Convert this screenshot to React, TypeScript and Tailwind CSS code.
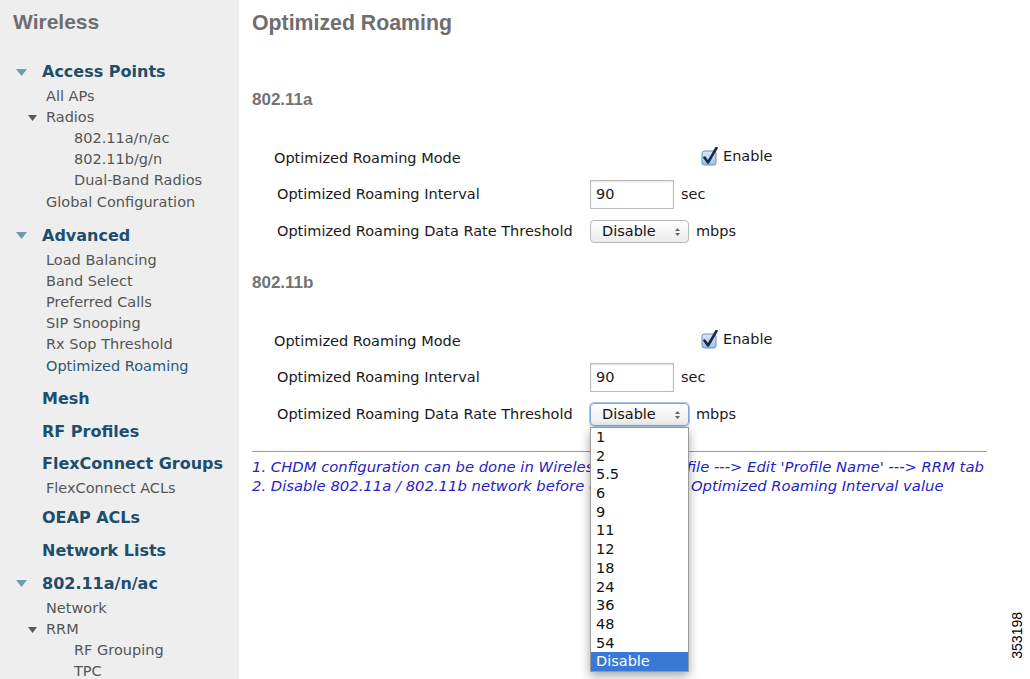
import React from 'react';

const SANS = "font-['DejaVu_Sans',Verdana,sans-serif]";
const ARIAL = "font-['Liberation_Sans',Arial,sans-serif]";

function BigTri() {
  return (
    <svg width="11" height="7" viewBox="0 0 11 7" className="shrink-0">
      <path d="M0 0 L11 0 L5.5 7 Z" fill="#6f9ca6" />
    </svg>
  );
}

function SmallTri() {
  return (
    <svg width="9" height="6" viewBox="0 0 9 6" className="shrink-0">
      <path d="M0 0 L9 0 L4.5 6 Z" fill="#5a5a5a" />
    </svg>
  );
}

function Heading({ label, open, mt }: { label: string; open?: boolean; mt: string }) {
  return (
    <div className={`flex items-center h-[22px] mb-[3px] ${mt}`}>
      <div className="w-[42px] pl-[16px] flex items-center">{open && <BigTri />}</div>
      <span className={`${SANS} text-[16px] font-bold text-[#1d4e6d] whitespace-nowrap`}>{label}</span>
    </div>
  );
}

function Sub({ label, level = 1, tri, active }: { label: string; level?: number; tri?: boolean; active?: boolean }) {
  return (
    <div className={`flex items-center h-[21.2px] ${level === 2 ? 'pl-[74px]' : 'pl-[28px]'}`}>
      {level === 1 && <div className="w-[18px] flex items-center">{tri && <SmallTri />}</div>}
      <span className={`${SANS} text-[14.5px] whitespace-nowrap ${active ? 'text-[#2c5a78]' : 'text-[#555555]'}`}>{label}</span>
    </div>
  );
}

function Sidebar() {
  return (
    <div className="w-[239px] shrink-0 h-full bg-[#eeeeee] overflow-hidden">
      <div className={`${ARIAL} text-[21px] font-bold text-[#6e6e6e] pl-[13px] pt-[9px] leading-[26px]`}>Wireless</div>
      <Heading label="Access Points" open mt="mt-[26px]" />
      <Sub label="All APs" />
      <Sub label="Radios" tri />
      <Sub label="802.11a/n/ac" level={2} />
      <Sub label="802.11b/g/n" level={2} />
      <Sub label="Dual-Band Radios" level={2} />
      <Sub label="Global Configuration" />
      <Heading label="Advanced" open mt="mt-[11.8px]" />
      <Sub label="Load Balancing" />
      <Sub label="Band Select" />
      <Sub label="Preferred Calls" />
      <Sub label="SIP Snooping" />
      <Sub label="Rx Sop Threshold" />
      <Sub label="Optimized Roaming" active />
      <Heading label="Mesh" mt="mt-[10.8px]" />
      <Heading label="RF Profiles" mt="mt-[11px]" />
      <Heading label="FlexConnect Groups" mt="mt-[10px]" />
      <Sub label="FlexConnect ACLs" />
      <Heading label="OEAP ACLs" mt="mt-[8px]" />
      <Heading label="Network Lists" mt="mt-[10.8px]" />
      <Heading label="802.11a/n/ac" open mt="mt-[11px]" />
      <Sub label="Network" />
      <Sub label="RRM" tri />
      <Sub label="RF Grouping" level={2} />
      <Sub label="TPC" level={2} />
    </div>
  );
}

function CheckBox() {
  return (
    <svg width="18" height="20" viewBox="0 0 18 20" className="shrink-0">
      <defs>
        <linearGradient id="cb" x1="0" y1="0" x2="0" y2="1">
          <stop offset="0" stopColor="#d9e8f7" />
          <stop offset="1" stopColor="#9ec2e8" />
        </linearGradient>
      </defs>
      <rect x="1" y="4" width="14" height="14" rx="2.5" fill="url(#cb)" stroke="#6d8db3" strokeWidth="1" />
      <path d="M3.5 10.5 L7 15.5 L15.5 1" fill="none" stroke="#1b2a4a" strokeWidth="2.6" strokeLinecap="round" strokeLinejoin="round" />
    </svg>
  );
}

function Arrows() {
  return (
    <svg width="7" height="10" viewBox="0 0 7 10" className="shrink-0">
      <path d="M1 4 L3.5 1 L6 4 Z M1 6 L3.5 9 L6 6 Z" fill="#666" />
    </svg>
  );
}

function SelectBox({ focused }: { focused?: boolean }) {
  return (
    <div
      className={`w-[99px] h-[23px] rounded-[4px] border ${focused ? 'border-[#7da6d6] shadow-[0_0_0_1px_#a9c6ea]' : 'border-[#b8b8b8]'} bg-gradient-to-b from-white to-[#ececec] flex items-center justify-between pl-[11px] pr-[7px]`}
    >
      <span className={`${SANS} text-[14.5px] text-[#111]`}>Disable</span>
      <Arrows />
    </div>
  );
}

const OPTIONS = ['1', '2', '5.5', '6', '9', '11', '12', '18', '24', '36', '48', '54', 'Disable'];

function Dropdown() {
  return (
    <div className="absolute left-0 top-[24px] w-[99px] bg-white border border-[#9a9a9a] shadow-[0_4px_10px_rgba(0,0,0,0.35)] z-10">
      {OPTIONS.map((o) => (
        <div
          key={o}
          className={`${SANS} text-[14.5px] h-[18.7px] leading-[18.7px] pl-[5px] ${o === 'Disable' ? 'bg-[#3a78d6] text-white' : 'text-[#111]'}`}
        >
          {o}
        </div>
      ))}
    </div>
  );
}

function Band({ name, open, first }: { name: string; open?: boolean; first?: boolean }) {
  const label = `${SANS} text-[14.5px] text-[#1a1a1a] whitespace-nowrap`;
  return (
    <div>
      <div className={`${ARIAL} text-[17px] font-bold text-[#737373] leading-[20px] ${first ? 'mt-[54px]' : 'mt-[23px]'}`}>{name}</div>
      <div className="mt-[30px]">
        <div className="flex items-center h-[36px] pt-[2px]">
          <div className={`w-[338px] pl-[22px] ${label}`}>Optimized Roaming Mode</div>
          <div className="ml-[111px] flex items-center gap-[4px] -mt-[4px]">
            <CheckBox />
            <span className={label}>Enable</span>
          </div>
        </div>
        <div className="flex items-center h-[37px]">
          <div className={`w-[338px] pl-[25px] ${label}`}>Optimized Roaming Interval</div>
          <div className="w-[84px] h-[29px] border border-[#bcbcbc] shadow-[inset_0_1px_2px_rgba(0,0,0,0.12)] bg-white flex items-center pl-[5px]">
            <span className={label}>90</span>
          </div>
          <span className={`${label} ml-[7px]`}>sec</span>
        </div>
        <div className="flex items-center h-[37px]">
          <div className={`w-[338px] pl-[25px] ${label}`}>Optimized Roaming Data Rate Threshold</div>
          <div className="relative">
            <SelectBox focused={open} />
            {open && <Dropdown />}
          </div>
          <span className={`${label} ml-[7px]`}>mbps</span>
        </div>
      </div>
    </div>
  );
}

export default function App() {
  return (
    <div className="w-[1030px] h-[679px] flex bg-white overflow-hidden relative">
      <Sidebar />
      <div className="flex-1 pl-[13px] pt-[10px]">
        <div className={`${ARIAL} text-[21.3px] font-bold text-[#6e6e6e] leading-[26px]`}>Optimized Roaming</div>
        <Band name="802.11a" first />
        <Band name="802.11b" open />
        <div className="w-[735px] h-px bg-[#8f9bc4] mt-[18px]" />
        <div className={`${SANS} italic text-[14.8px] text-[#1f24c4] leading-[19px] mt-[5px] whitespace-nowrap`}>
          <div>1. CHDM configuration can be done in Wireless ---&gt; RF Profile ---&gt; Edit 'Profile Name' ---&gt; RRM tab</div>
          <div>2. Disable 802.11a / 802.11b network before changing the Optimized Roaming Interval value</div>
        </div>
      </div>
      <div className={`${ARIAL} absolute right-[2px] top-[612px] text-[14px] text-black [writing-mode:vertical-rl] rotate-180`}>353198</div>
    </div>
  );
}
